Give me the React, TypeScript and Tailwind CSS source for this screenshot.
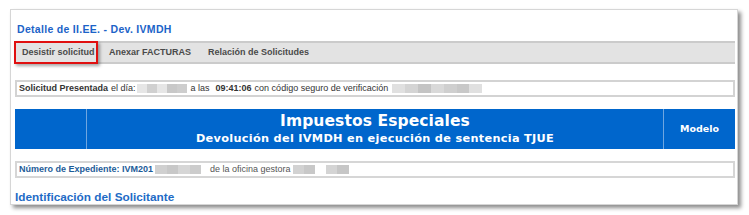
import React from "react";

function Blur({ w, parts }: { w: number; parts?: string[] }) {
  const ps = parts ?? ["#d9d9d9", "#cfcfcf", "#e2e2e2", "#c9c9c9"];
  return (
    <span className="inline-flex h-[9px] align-middle" style={{ width: w }}>
      {ps.map((c, i) => (
        <span key={i} className="h-full flex-1" style={{ backgroundColor: c }} />
      ))}
    </span>
  );
}

export default function App() {
  return (
    <div className="w-[749px] h-[215px] bg-white relative overflow-hidden">
      <div className="absolute left-[10px] top-[9px] w-[728px] h-[196px] bg-white border border-[#d6d6d6] shadow-[3px_3px_4px_rgba(0,0,0,0.45)] pl-[4px] pr-[2px] flex flex-col">
        <div className="h-[31px] pt-[12px] pl-[2px] font-['Liberation_Sans',Arial,sans-serif] font-bold text-[10.5px] text-[#1c63c8] tracking-[0.3px] leading-[14px]">
          Detalle de II.EE. - Dev. IVMDH
        </div>
        <div className="h-[23px] bg-[#e3e3e3] border-t-2 border-b-2 border-[#cbcbcb] flex items-center font-['Liberation_Sans',Arial,sans-serif] font-bold text-[9px] text-[#4a4a4a]">
          <div className="h-[23px] w-[84px] -ml-[1px] border-2 border-[#e01010] shadow-[2px_2px_3px_rgba(0,0,0,0.35)] flex items-center pl-[6px]">
            Desistir solicitud
          </div>
          <div className="ml-[11px]">Anexar FACTURAS</div>
          <div className="ml-[17px]">Relación de Solicitudes</div>
        </div>
        <div className="mt-[16px] h-[17px] border-2 border-[#d3d3d3] flex items-center pl-[2px] font-['Liberation_Sans',Arial,sans-serif] text-[9px] text-[#333]">
          <span className="font-bold">Solicitud Presentada</span>
          <span className="ml-[3px]">el día:</span>
          <span className="ml-[1px]"><Blur w={50} parts={["#e6e6e6", "#d0d0d0", "#e6e6e6", "#c8c8c8", "#cdcdcd"]} /></span>
          <span className="ml-[4px]">a las</span>
          <span className="ml-[6px] font-bold">09:41:06</span>
          <span className="ml-[3px]">con código seguro de verificación</span>
          <span className="ml-[4px]"><Blur w={90} parts={["#e0e0e0", "#d4d4d4", "#c4c4c4", "#d9d9d9", "#cfcfcf", "#c8c8c8", "#e0e0e0"]} /></span>
        </div>
        <div className="mt-[12px] h-[41px] bg-[#0066cc] flex text-white font-['DejaVu_Sans',Verdana,sans-serif] font-bold">
          <div className="w-[72px] border-r border-[#6fa6e0]" />
          <div className="flex-1 flex flex-col items-center justify-center border-r border-[#6fa6e0] leading-none">
            <div className="text-[15.5px] tracking-[0.1px]">Impuestos Especiales</div>
            <div className="text-[11.3px] mt-[3px] tracking-[0.3px]">Devolución del IVMDH en ejecución de sentencia TJUE</div>
          </div>
          <div className="w-[71px] flex items-center justify-center text-[9.5px]">Modelo</div>
        </div>
        <div className="mt-[12px] h-[17px] border-2 border-[#d6d6d6] flex items-center pl-[2px] font-['Liberation_Sans',Arial,sans-serif] text-[9px]">
          <span className="font-bold text-[#1d5c99]">Número de Expediente: IVM201</span>
          <span className="ml-[2px]"><Blur w={46} parts={["#d0d0d0", "#c8c8c8", "#d6d6d6", "#cccccc"]} /></span>
          <span className="ml-[9px] text-[#555]">de la oficina gestora</span>
          <span className="ml-[2px]"><Blur w={56} parts={["#d2d2d2", "#c8c8c8", "#ffffff", "#d4d4d4", "#c6c6c6"]} /></span>
        </div>
        <div className="mt-[14px] font-['Liberation_Sans',Arial,sans-serif] font-bold text-[11.8px] text-[#1e6bc6] leading-none">
          Identificación del Solicitante
        </div>
      </div>
    </div>
  );
}
